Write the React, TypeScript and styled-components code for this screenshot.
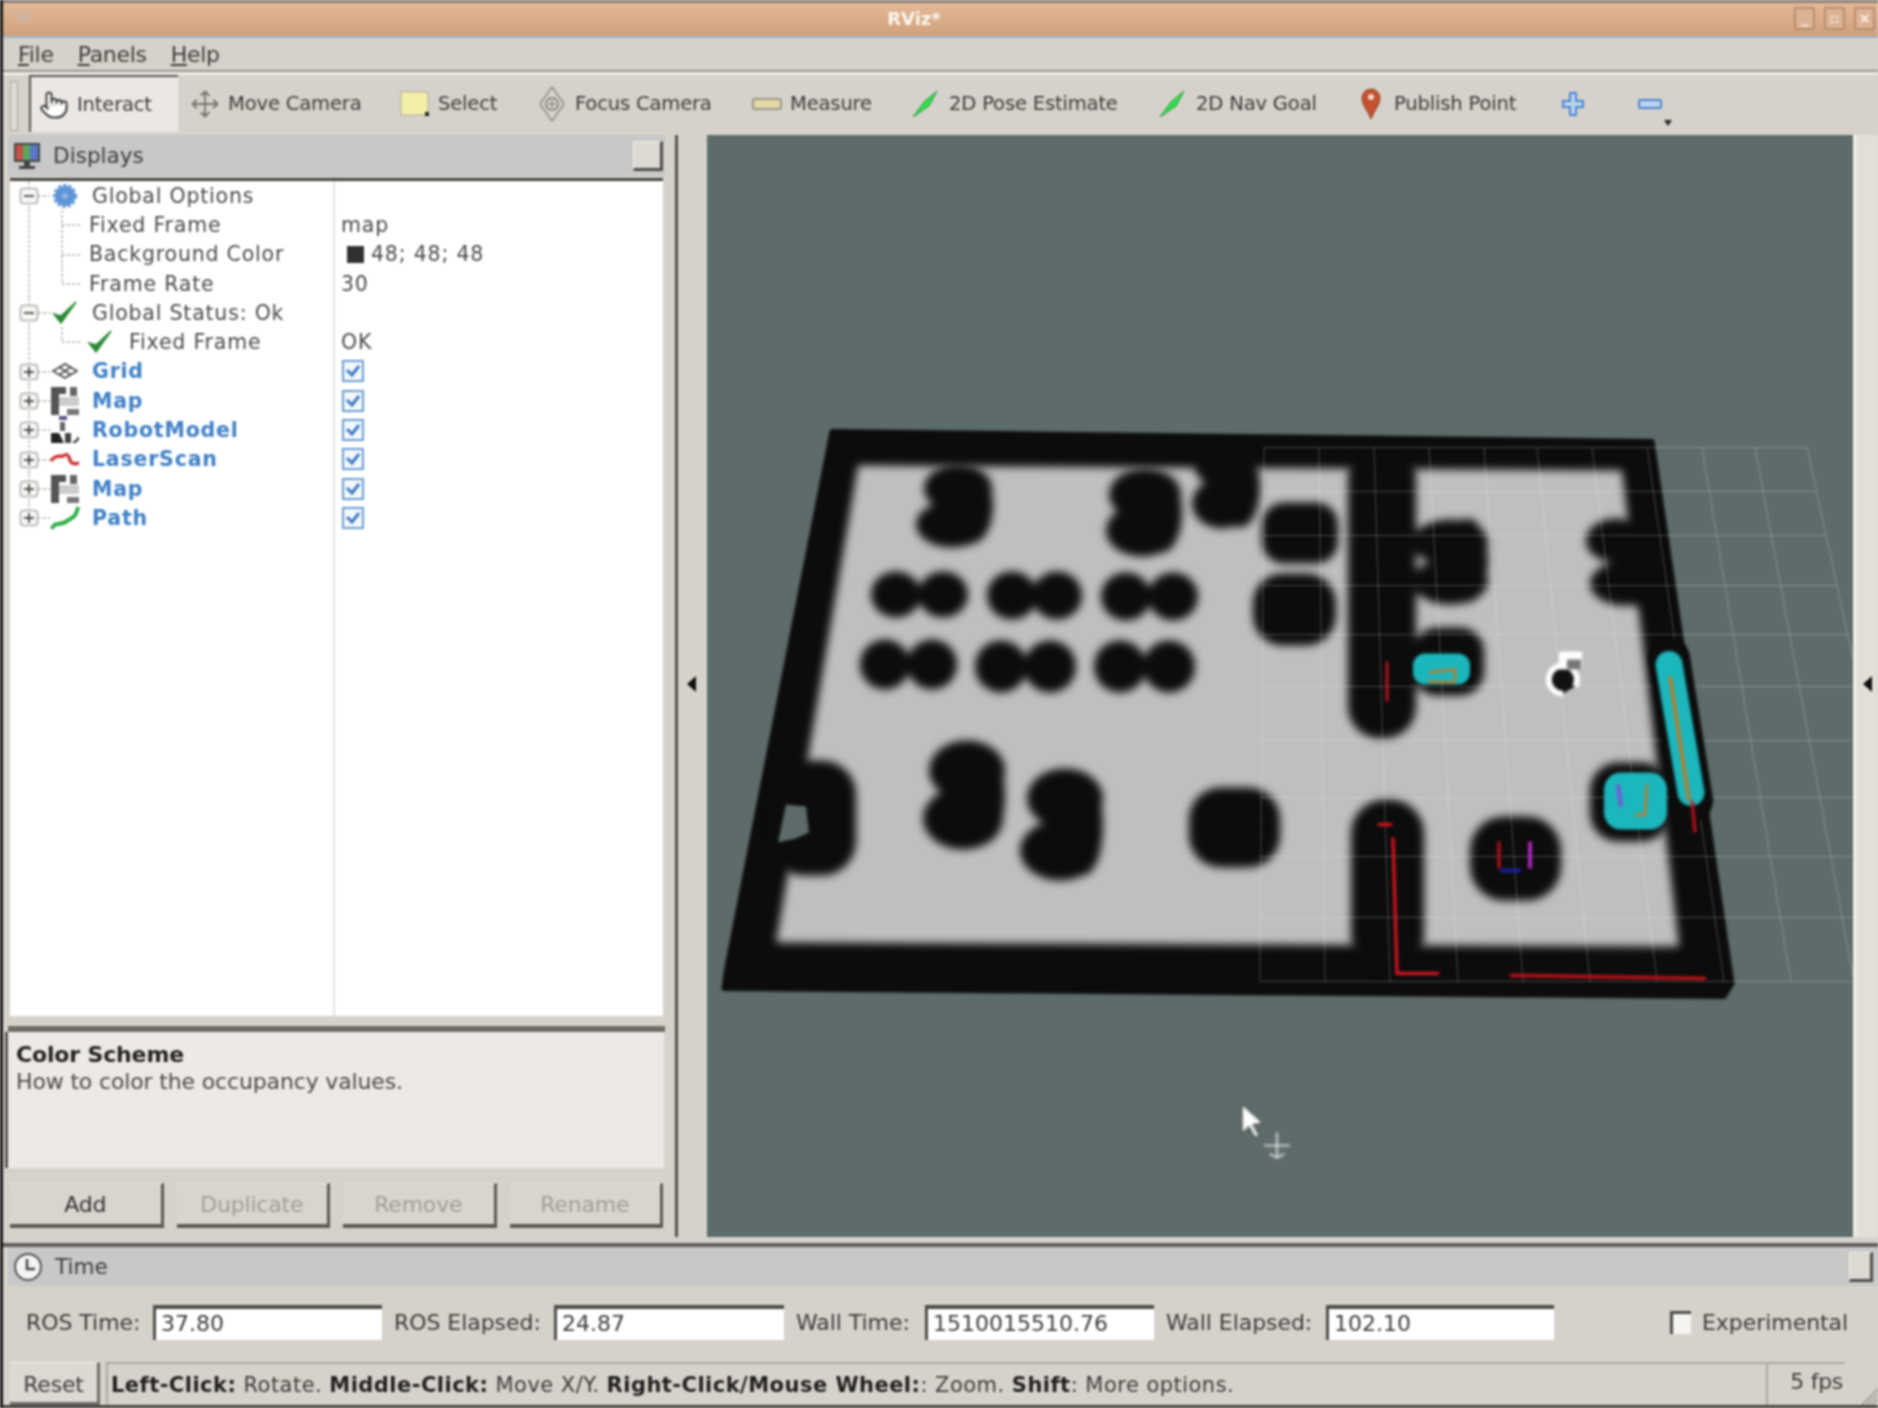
import styled, { createGlobalStyle } from 'styled-components';
import { Move, Pointer } from 'lucide-react';

const GlobalStyle = createGlobalStyle`
  html, body {
    margin: 0;
    padding: 0;
    background: #d6d2cb;
  }
`;

const Window = styled.div`
  width: 1878px;
  height: 1408px;
  overflow: hidden;
  display: flex;
  flex-direction: column;
  position: relative;
  background: #d6d2cb;
  color: #3c3c3a;
  font-family: 'DejaVu Sans', sans-serif;
  font-size: 20px;
  filter: blur(0.9px);
  &::before {
    content: '';
    position: absolute;
    left: 0;
    top: 0;
    bottom: 0;
    width: 3px;
    background: #141414;
    z-index: 2;
  }
`;

const TitleBar = styled.div`
  height: 30px;
  flex: none;
  border-top: 3px solid #8d8378;
  border-bottom: 2px solid #9db3c6;
  background: linear-gradient(#e4b896, #cfa17c);
  display: flex;
  align-items: center;
  position: relative;
  padding: 0 3px 3px 14px;
`;

const TitleText = styled.div`
  position: absolute;
  left: 880px;
  width: 68px;
  text-align: center;
  color: #fbf6f0;
  font-size: 18px;
  font-weight: bold;
`;

const WinButtons = styled.div`
  margin-left: auto;
  display: flex;
  gap: 9px;
`;

const WinButton = styled.div`
  width: 21px;
  height: 23px;
  box-sizing: border-box;
  border: 2px solid #b98d6c;
  border-radius: 2px;
  background: #dcb294;
  color: #fff5ea;
  font-size: 14px;
  font-weight: bold;
  line-height: 18px;
  text-align: center;
`;

const MenuBar = styled.div`
  height: 32px;
  flex: none;
  border-bottom: 2px solid #96938c;
  display: flex;
  align-items: center;
  gap: 24px;
  padding-left: 18px;
  font-size: 22px;
  letter-spacing: -0.3px;
`;

const MenuItem = styled.span`
  &::first-letter {
    text-decoration: underline;
  }
`;

const ToolBar = styled.div`
  height: 60px;
  flex: none;
  box-sizing: content-box;
  border-top: 3px solid #efece7;
  display: flex;
  align-items: stretch;
  position: relative;
`;

const Grip = styled.div`
  width: 29px;
  flex: none;
  position: relative;
  &::before {
    content: '';
    position: absolute;
    left: 10px;
    top: 6px;
    bottom: 4px;
    width: 6px;
    border: 1px solid #a8a59f;
    background: #dedbd5;
  }
`;

const ToolButton = styled.div<{ $width: number; $active?: boolean }>`
  width: ${(p) => p.$width}px;
  flex: none;
  box-sizing: border-box;
  height: 57px;
  margin-right: ${(p) => (p.$active ? 4 : 0)}px;
  padding-left: 8px;
  display: flex;
  align-items: center;
  gap: 8px;
  font-size: 19.6px;
  letter-spacing: -0.2px;
  white-space: nowrap;
  background: ${(p) => (p.$active ? '#ebe8e3' : 'transparent')};
  border-top: ${(p) => (p.$active ? '2px solid #55534f' : 'none')};
  border-left: ${(p) => (p.$active ? '2px solid #55534f' : 'none')};
`;

const ToolIcon = styled.span`
  width: 30px;
  height: 36px;
  flex: none;
  display: flex;
  align-items: center;
  justify-content: center;
`;

const DropMark = styled.div`
  position: absolute;
  left: 1664px;
  top: 45px;
  width: 0;
  height: 0;
  border-left: 4px solid transparent;
  border-right: 4px solid transparent;
  border-top: 6px solid #222;
`;

const Main = styled.div`
  height: 1102px;
  flex: none;
  display: flex;
`;

const LeftColumn = styled.div`
  width: 657px;
  flex: none;
  margin-left: 8px;
  display: flex;
  flex-direction: column;
  position: relative;
`;

const DockHeader = styled.div<{ $height: number }>`
  height: ${(p) => p.$height}px;
  flex: none;
  background: #c8c8c8;
  display: flex;
  align-items: center;
  font-size: 21.6px;
`;

const DockTitle = styled.span`
  margin-left: 11px;
`;

const DockFloat = styled.div`
  margin-left: auto;
  width: 30px;
  height: 30px;
  box-sizing: border-box;
  background: #dcd9d3;
  border: 1px solid #f3f1ec;
  border-right: 3px solid #4e4d4a;
  border-bottom: 3px solid #4e4d4a;
`;

const DisplaysFloat = styled(DockFloat)`
  margin-right: 2px;
`;

const Tree = styled.div`
  margin: 2px 2px 0;
  height: 838px;
  flex: none;
  box-sizing: border-box;
  background: #fff;
  border-top: 3px solid #454441;
  position: relative;
  font-size: 20.5px;
  letter-spacing: 0.8px;
  &::after {
    content: '';
    position: absolute;
    left: 323px;
    top: 0;
    bottom: 0;
    width: 2px;
    background: #e4e4e2;
  }
`;

const TreeRow = styled.div`
  height: 29.3px;
  display: flex;
  align-items: center;
`;

const NameCell = styled.div`
  width: 323px;
  flex: none;
  display: flex;
  align-items: center;
  height: 100%;
`;

const RowIcon = styled.span`
  width: 30px;
  height: 30px;
  flex: none;
  display: flex;
  align-items: center;
  justify-content: center;
`;

const RowLabel = styled.span<{ $indent: number; $display?: boolean }>`
  margin-left: ${(p) => p.$indent}px;
  white-space: nowrap;
  color: ${(p) => (p.$display ? '#3f80c6' : '#4a4a48')};
  font-weight: ${(p) => (p.$display ? 'bold' : 'normal')};
`;

const ValueCell = styled.div`
  margin-left: 8px;
  display: flex;
  align-items: center;
  gap: 7px;
  color: #4a4a48;
`;

const Swatch = styled.span`
  width: 17px;
  height: 17px;
  margin-left: 6px;
  background: #303030;
`;

const Check = styled.span`
  width: 22px;
  height: 22px;
  box-sizing: border-box;
  margin-left: 1px;
  border: 2px solid #6a9bd0;
  background: #f4f8fc;
  display: flex;
  align-items: center;
  justify-content: center;
`;

const SplitLine = styled.div`
  height: 16px;
  flex: none;
  box-sizing: border-box;
  border-bottom: 6px solid #6f6d68;
`;

const HelpPanel = styled.div`
  height: 136px;
  flex: none;
  box-sizing: border-box;
  margin-right: 1px;
  padding: 9px 8px;
  background: #edeae5;
  box-shadow: -3px 0 0 #555450;
  font-size: 22px;
  line-height: 27px;
  letter-spacing: -0.15px;
  color: #4b4a47;
  b {
    display: block;
    color: #222;
  }
`;

const ButtonRow = styled.div`
  display: flex;
  gap: 13px;
  padding: 15px 2px 0;
`;

const PanelButton = styled.div<{ $disabled?: boolean }>`
  width: 153.5px;
  height: 45px;
  box-sizing: border-box;
  display: flex;
  align-items: center;
  justify-content: center;
  font-size: 22px;
  letter-spacing: -0.2px;
  color: ${(p) => (p.$disabled ? '#a09e98' : '#333')};
  background: #d8d5ce;
  border-top: 1px solid #e6e3dd;
  border-right: 3px solid #5a5955;
  border-bottom: 4px solid #5a5955;
`;

const Splitter = styled.div`
  width: 42px;
  flex: none;
  position: relative;
  &::before {
    content: '';
    position: absolute;
    left: 10px;
    top: 0;
    bottom: 0;
    width: 3px;
    background: #55534f;
  }
`;

const Arrow = styled.div<{ $left: number }>`
  position: absolute;
  left: ${(p) => p.$left}px;
  top: 541px;
  width: 0;
  height: 0;
  border-top: 8px solid transparent;
  border-bottom: 8px solid transparent;
  border-right: 9px solid #111;
`;

const Viewport = styled.div`
  width: 1146px;
  flex: none;
  background: #5d6c6a;
`;

const MapDrawing = styled.svg`
  display: block;
  width: 100%;
  height: 100%;
`;

const RightStrip = styled.div`
  flex: 1;
  position: relative;
  background: #e2dfd9;
  border-left: 4px solid #efede8;
`;

const TimeDock = styled.div`
  height: 125px;
  flex: none;
  box-sizing: border-box;
  padding: 6px 0 0 8px;
  display: flex;
  flex-direction: column;
`;

const DockRule = styled.div`
  height: 4px;
  flex: none;
  background: #5f5d59;
  margin-left: -8px;
`;

const TimeFloat = styled(DockFloat)`
  width: 24px;
  margin-right: 5px;
`;

const TimeRow = styled.div`
  flex: 1;
  display: flex;
  align-items: center;
  padding: 0 0 4px 18px;
  font-size: 22px;
  letter-spacing: -0.05px;
`;

const TimeLabel = styled.span<{ $width: number }>`
  width: ${(p) => p.$width}px;
  flex: none;
  white-space: nowrap;
`;

const TimeInput = styled.div<{ $width: number }>`
  width: ${(p) => p.$width}px;
  height: 35px;
  flex: none;
  box-sizing: border-box;
  background: #fff;
  border-top: 4px solid #4e4d49;
  border-left: 3px solid #4e4d49;
  padding-left: 5px;
  line-height: 29px;
  letter-spacing: 0;
  margin-right: 12px;
`;

const Experimental = styled.label`
  margin-left: 104px;
  display: flex;
  align-items: center;
  gap: 11px;
`;

const ExperimentalBox = styled.span`
  width: 21px;
  height: 23px;
  box-sizing: border-box;
  background: #f6f4f0;
  border-top: 3px solid #4e4d49;
  border-left: 3px solid #4e4d49;
`;

const StatusBar = styled.div`
  height: 43px;
  flex: none;
  display: flex;
  padding-left: 10px;
  border-bottom: 3px solid #45443f;
  position: relative;
`;

const ResetButton = styled.div`
  width: 90px;
  box-sizing: border-box;
  display: flex;
  align-items: center;
  justify-content: center;
  padding-top: 3px;
  background: #dcd9d3;
  border-top: 1px solid #efece7;
  border-right: 3px solid #6d6b66;
  border-bottom: 3px solid #6d6b66;
  font-size: 22px;
  letter-spacing: -0.2px;
`;

const StatusText = styled.div`
  width: 1660px;
  margin-left: 6px;
  box-sizing: border-box;
  border-top: 2px solid #aaa7a0;
  border-left: 2px solid #aaa7a0;
  padding: 9px 0 0 3px;
  font-size: 21px;
  letter-spacing: 0.47px;
  white-space: nowrap;
  b {
    color: #1f1f1e;
  }
`;

const FpsBox = styled.div`
  width: 79px;
  box-sizing: border-box;
  border-top: 2px solid #aaa7a0;
  border-left: 2px solid #aaa7a0;
  text-align: right;
  padding: 5px 2px 0 0;
  font-size: 22px;
  letter-spacing: -0.3px;
`;

const ResizeGrip = styled.svg`
  position: absolute;
  right: 0;
  bottom: 0;
`;

const toolItems = [
  { label: 'Interact', width: 149, active: true, icon: <Pointer size={30} color="#444" fill="#fff" strokeWidth={1.6} /> },
  {
    label: 'Move Camera',
    width: 210,
    icon: <Move size={30} color="#77756f" strokeWidth={1.5} />,
  },
  {
    label: 'Select',
    width: 137,
    icon: (
      <svg width="30" height="28" viewBox="0 0 30 28">
        <rect x="1" y="2" width="27" height="23" fill="#f4efa8" stroke="#77756a" strokeDasharray="2 2" />
        <rect x="25" y="22" width="4" height="4" fill="#222" />
      </svg>
    ),
  },
  {
    label: 'Focus Camera',
    width: 215,
    icon: (
      <svg width="30" height="36" viewBox="0 0 30 36">
        <path d="M15 1 L27 18 L15 35 L3 18 Z" fill="none" stroke="#8e8c86" strokeWidth="1.5" />
        <circle cx="15" cy="18" r="6" fill="none" stroke="#77756f" strokeWidth="1.5" />
        <path d="M15 14v8M11 18h8" stroke="#77756f" />
      </svg>
    ),
  },
  {
    label: 'Measure',
    width: 159,
    icon: (
      <svg width="30" height="12" viewBox="0 0 30 12">
        <rect x="1" y="1" width="28" height="10" rx="2" fill="#e2d9a3" stroke="#87847a" strokeWidth="1.5" />
      </svg>
    ),
  },
  {
    label: '2D Pose Estimate',
    width: 247,
    icon: (
      <svg width="30" height="30" viewBox="0 0 30 30">
        <path d="M2 28 L13 13 L26 2 L18 17 Z" fill="#2fe04d" stroke="#2a9a3c" strokeWidth="1" />
      </svg>
    ),
  },
  {
    label: '2D Nav Goal',
    width: 198,
    icon: (
      <svg width="30" height="30" viewBox="0 0 30 30">
        <path d="M2 28 L13 13 L26 2 L18 17 Z" fill="#2fe04d" stroke="#2a9a3c" strokeWidth="1" />
      </svg>
    ),
  },
  {
    label: 'Publish Point',
    width: 202,
    icon: (
      <svg width="20" height="32" viewBox="0 0 20 32">
        <path d="M10 31 C7 23 1 17 1 10 A9 9 0 0 1 19 10 C19 17 13 23 10 31 Z" fill="#c4502f" stroke="#8c4425" />
        <circle cx="10" cy="9" r="3" fill="#f1d6c8" />
      </svg>
    ),
  },
  {
    label: '',
    width: 77,
    icon: (
      <svg width="24" height="26" viewBox="0 0 24 26">
        <path d="M9 2h6v8h7v6h-7v8H9v-8H2v-6h7z" fill="#bcd4f0" stroke="#4a86d0" strokeWidth="2" />
      </svg>
    ),
  },
  {
    label: '',
    width: 60,
    icon: (
      <svg width="24" height="12" viewBox="0 0 24 12">
        <rect x="1" y="2" width="22" height="8" rx="1" fill="#bcd4f0" stroke="#4a86d0" strokeWidth="2" />
      </svg>
    ),
  },
];

const MapGlyph = () => (
  <svg width="30" height="30" viewBox="0 0 30 30">
    <path d="M1 1h15v7H9v21H1z" fill="#555" />
    <rect x="20" y="1" width="7" height="9" fill="#666" />
    <rect x="9" y="11" width="20" height="9" fill="#ccc" />
    <rect x="17" y="23" width="12" height="6" fill="#777" />
  </svg>
);

const iconFor: Record<string, React.ReactNode> = {
  gear: (
    <svg width="26" height="26" viewBox="0 0 26 26">
      <circle cx="13" cy="13" r="10" fill="#5f94d6" stroke="#5f94d6" strokeWidth="4" strokeDasharray="3 2" />
      <circle cx="13" cy="13" r="3" fill="#8db4e4" />
    </svg>
  ),
  check: (
    <svg width="28" height="26" viewBox="0 0 28 26">
      <path d="M3 14 L10 23 L25 2 L10 16 Z" fill="#2c8a35" stroke="#2c8a35" strokeWidth="1.5" />
    </svg>
  ),
  grid: (
    <svg width="26" height="16" viewBox="0 0 26 16">
      <path d="M1 8 L13 1 L25 8 L13 15 Z" fill="none" stroke="#555" strokeWidth="2" />
      <path d="M7 4 L19 12 M19 4 L7 12" stroke="#555" strokeWidth="2" />
    </svg>
  ),
  map: <MapGlyph />,
  robot: (
    <svg width="30" height="30" viewBox="0 0 30 30">
      <rect x="9" y="1" width="8" height="4" fill="#56568a" />
      <rect x="10" y="7" width="5" height="9" fill="#666" />
      <path d="M1 28V18h8l5 10z" fill="#222" />
      <path d="M15 18h6v10h-6z" fill="#444" />
      <path d="M23 27c4 0 5-2 5-5" fill="none" stroke="#333" strokeWidth="2" />
    </svg>
  ),
  laser: (
    <svg width="30" height="20" viewBox="0 0 30 20">
      <path d="M1 12 C6 5 10 8 13 7 C17 5 17 5 19 8 C20 14 23 16 29 14" fill="none" stroke="#cf3838" strokeWidth="3.5" />
    </svg>
  ),
  path: (
    <svg width="30" height="28" viewBox="0 0 30 28">
      <path d="M2 25 C4 17 12 22 17 17 C22 13 26 14 28 3" fill="none" stroke="#2fb04a" strokeWidth="4" />
    </svg>
  ),
};

type Row = {
  name: string;
  level: 'top' | 'child' | 'statusChild';
  expanded?: boolean;
  last?: boolean;
  end?: boolean;
  icon?: string;
  display?: boolean;
  value?: string;
  swatch?: boolean;
  checked?: boolean;
};

const rows: Row[] = [
  { name: 'Global Options', level: 'top', expanded: true, icon: 'gear' },
  { name: 'Fixed Frame', level: 'child', value: 'map' },
  { name: 'Background Color', level: 'child', value: '48; 48; 48', swatch: true },
  { name: 'Frame Rate', level: 'child', value: '30', last: true },
  { name: 'Global Status: Ok', level: 'top', expanded: true, icon: 'check' },
  { name: 'Fixed Frame', level: 'statusChild', icon: 'check', value: 'OK', last: true },
  { name: 'Grid', level: 'top', icon: 'grid', display: true, checked: true },
  { name: 'Map', level: 'top', icon: 'map', display: true, checked: true },
  { name: 'RobotModel', level: 'top', icon: 'robot', display: true, checked: true },
  { name: 'LaserScan', level: 'top', icon: 'laser', display: true, checked: true },
  { name: 'Map', level: 'top', icon: 'map', display: true, checked: true },
  { name: 'Path', level: 'top', icon: 'path', display: true, checked: true, end: true },
];

const guideWidth = { top: 40, child: 79, statusChild: 75 };
const labelIndent = { top: 12, child: 0, statusChild: 14 };

// dotted branches and the +/- box in front of each tree row
const TreeGuide = ({ row }: { row: Row }) => {
  const width = guideWidth[row.level];
  return (
    <svg width={width} height="29.3" viewBox={`0 0 ${width} 29.3`} style={{ flex: 'none' }}>
      <path d={`M19 0V${row.end ? 15 : 29.3}`} stroke="#b4b4b2" strokeWidth="1.4" strokeDasharray="3 2" />
      {row.level === 'top' ? (
        <>
          <path d="M28 15H40" stroke="#b4b4b2" strokeWidth="1.4" strokeDasharray="3 2" />
          <rect x="10.5" y="7.5" width="17" height="15" rx="3" fill="#f7f7f5" stroke="#b0b0ad" strokeWidth="1.6" />
          <path d="M14 15H24" stroke="#333" strokeWidth="1.6" />
          {!row.expanded && <path d="M19 10V20" stroke="#333" strokeWidth="1.6" />}
        </>
      ) : (
        <path
          d={`M52 0V${row.last ? 15 : 29.3}M52 15H72`}
          stroke="#b4b4b2"
          strokeWidth="1.4"
          strokeDasharray="3 2"
        />
      )}
    </svg>
  );
};

const CheckMark = () => (
  <svg width="16" height="14" viewBox="0 0 16 14">
    <path d="M2 6 L7 11 L14 2" fill="none" stroke="#3b79c2" strokeWidth="3" />
  </svg>
);

const inflated = [
  { cx: 958, cy: 488, rx: 34, ry: 24 },
  { cx: 952, cy: 524, rx: 36, ry: 23 },
  { cx: 972, cy: 505, rx: 21, ry: 38 },
  { cx: 1145, cy: 494, rx: 36, ry: 26 },
  { cx: 1142, cy: 530, rx: 36, ry: 26 },
  { cx: 1162, cy: 512, rx: 20, ry: 40 },
  { cx: 1225, cy: 466, rx: 30, ry: 22 },
  { cx: 1222, cy: 503, rx: 30, ry: 25 },
  { cx: 1240, cy: 487, rx: 20, ry: 40 },
  { cx: 896, cy: 594, rx: 25, ry: 23 },
  { cx: 943, cy: 594, rx: 25, ry: 23 },
  { cx: 1012, cy: 595, rx: 25, ry: 24 },
  { cx: 1057, cy: 595, rx: 25, ry: 24 },
  { cx: 1126, cy: 596, rx: 25, ry: 24 },
  { cx: 1173, cy: 596, rx: 25, ry: 24 },
  { cx: 885, cy: 664, rx: 25, ry: 25 },
  { cx: 932, cy: 664, rx: 25, ry: 25 },
  { cx: 1001, cy: 666, rx: 26, ry: 26 },
  { cx: 1050, cy: 666, rx: 26, ry: 26 },
  { cx: 1120, cy: 666, rx: 26, ry: 26 },
  { cx: 1169, cy: 666, rx: 26, ry: 26 },
  { cx: 967, cy: 770, rx: 38, ry: 30 },
  { cx: 963, cy: 818, rx: 40, ry: 31 },
  { cx: 985, cy: 795, rx: 20, ry: 48 },
  { cx: 1065, cy: 798, rx: 38, ry: 30 },
  { cx: 1060, cy: 850, rx: 40, ry: 30 },
  { cx: 1083, cy: 825, rx: 20, ry: 50 },
  { cx: 1450, cy: 542, rx: 38, ry: 23 },
  { cx: 1450, cy: 581, rx: 38, ry: 23 },
  { cx: 1468, cy: 560, rx: 20, ry: 42 },
  { cx: 1616, cy: 540, rx: 30, ry: 22 },
  { cx: 1620, cy: 583, rx: 30, ry: 21 },
];

const blocks = [
  { x: 1262, y: 502, w: 76, h: 61, r: 22 },
  { x: 1253, y: 573, w: 83, h: 72, r: 30 },
  { x: 1189, y: 787, w: 91, h: 80, r: 32 },
  { x: 770, y: 760, w: 86, h: 115, r: 34 },
  { x: 1348, y: 445, w: 68, h: 293, r: 32 },
  { x: 1351, y: 799, w: 73, h: 170, r: 34 },
  { x: 1413, y: 627, w: 71, h: 68, r: 24 },
  { x: 1590, y: 762, w: 80, h: 79, r: 28 },
  { x: 1470, y: 816, w: 91, h: 84, r: 34 },
  { x: 1610, y: 520, w: 50, h: 85, r: 8 },
];

const rowYs = [447, 491, 535, 585, 634, 686, 740, 797, 856, 917, 981];
const topXs = [1264, 1319, 1374, 1429, 1484, 1537, 1592, 1647, 1702, 1755, 1807];
const bottomXs = [1260, 1325, 1390, 1458, 1523, 1590, 1657, 1724, 1791, 1854, 1923];

const xAt = (col: number, y: number) =>
  topXs[col] + ((bottomXs[col] - topXs[col]) * (y - 447)) / (981 - 447);

const SceneMap = () => (
  <MapDrawing viewBox="707 135 1146 1101">
    <defs>
      <filter id="soft" x="-10%" y="-10%" width="120%" height="120%" colorInterpolationFilters="sRGB">
        <feGaussianBlur stdDeviation="4" />
      </filter>
      <filter id="slight" x="-10%" y="-10%" width="120%" height="120%" colorInterpolationFilters="sRGB">
        <feGaussianBlur stdDeviation="1" />
      </filter>
    </defs>
    <polygon
      points="832,431 1652,441 1732,983 1724,996 724,988 726,972"
      fill="#0c0c0c"
      stroke="#0c0c0c"
      strokeWidth="5"
      strokeLinejoin="round"
      filter="url(#slight)"
    />
    <polygon points="858,465 1622,470 1679,946 776,942" fill="#bfbfbf" filter="url(#soft)" />
    <g filter="url(#soft)" fill="#0c0c0c">
      {inflated.map((e) => (
        <ellipse key={`${e.cx}-${e.cy}`} {...e} />
      ))}
      {blocks.map((b) => (
        <rect key={`${b.x}-${b.y}`} x={b.x} y={b.y} width={b.w} height={b.h} rx={b.r} />
      ))}
    </g>
    <polygon points="786,804 806,806 809,832 796,838 778,842" fill="#5d6c6a" filter="url(#slight)" />
    <g stroke="#ffffff" strokeOpacity="0.17" strokeWidth="1.4" fill="none">
      {rowYs.map((y) => (
        <path key={y} d={`M${xAt(0, y)} ${y}L${Math.min(xAt(10, y), 1853)} ${y}`} />
      ))}
      {topXs.map((x, i) => (
        <path key={x} d={`M${x} 447L${xAt(i, 981)} 981`} />
      ))}
    </g>
    <g filter="url(#slight)">
      <path d="M1669 658L1692 800" stroke="#0c0c0c" strokeWidth="42" strokeLinecap="round" />
      <path d="M1669 664L1691 792" stroke="#1cb7bd" strokeWidth="27" strokeLinecap="round" />
      <path d="M1670 676L1689 800" stroke="#c5781f" strokeWidth="3.5" />
      <path d="M1692 800L1695 832" stroke="#c4141c" strokeWidth="3" />
      <rect x="1413" y="653" width="57" height="31" rx="12" fill="#1cb7bd" />
      <path d="M1428 681L1455 682M1455 681V669L1429 672" fill="none" stroke="#c5781f" strokeWidth="2.5" />
      <rect x="1604" y="772" width="63" height="57" rx="17" fill="#1cb7bd" />
      <path d="M1618 784L1621 806" stroke="#7a55d8" strokeWidth="4" />
      <path d="M1647 784L1645 814L1635 815" fill="none" stroke="#c5781f" strokeWidth="2.5" />
      <path d="M1499 841V868" stroke="#c4141c" strokeWidth="3" />
      <path d="M1530 841V868" stroke="#c92bd8" strokeWidth="3.5" />
      <path d="M1500 870H1521" stroke="#1c1c9c" strokeWidth="4" />
      <path d="M1387 661V701" stroke="#e01620" strokeWidth="2.5" />
      <path d="M1378 824H1392M1393 837L1397 973H1439" fill="none" stroke="#ec1620" strokeWidth="3" />
      <path d="M1510 975L1706 978" stroke="#c4141c" strokeWidth="3.5" />
      <path d="M1563 693A14 14 0 1 1 1575 686" fill="#111" stroke="#fff" strokeWidth="6" />
      <rect x="1559" y="651" width="23" height="18" fill="#fff" />
      <rect x="1567" y="659" width="14" height="10" fill="#777" />
    </g>
    <g filter="url(#slight)">
      <path d="M1242 1104V1133L1249 1126L1255 1137L1259 1135L1253 1124L1263 1123Z" fill="#fff" stroke="#222" strokeWidth="1" />
      <path d="M1277 1132V1158M1264 1145H1290M1270 1153Q1277 1160 1284 1153" fill="none" stroke="#f2f2f2" strokeWidth="1.6" />
    </g>
  </MapDrawing>
);

const App = () => (
  <Window>
    <GlobalStyle />
    <TitleBar>
      <svg width="20" height="14" viewBox="0 0 20 14">
        <path d="M2 2h6v4H2zM11 2h6v4h-6zM6 8h8v4H6z" fill="none" stroke="#c9b6a5" strokeWidth="1.5" />
      </svg>
      <TitleText>RViz*</TitleText>
      <WinButtons>
        <WinButton>_</WinButton>
        <WinButton>▫</WinButton>
        <WinButton>×</WinButton>
      </WinButtons>
    </TitleBar>
    <MenuBar>
      <MenuItem>File</MenuItem>
      <MenuItem>Panels</MenuItem>
      <MenuItem>Help</MenuItem>
    </MenuBar>
    <ToolBar>
      <Grip />
      {toolItems.map((item, i) => (
        <ToolButton key={i} $width={item.width} $active={item.active}>
          <ToolIcon>{item.icon}</ToolIcon>
          {item.label && <span>{item.label}</span>}
        </ToolButton>
      ))}
      <DropMark />
    </ToolBar>
    <Main>
      <LeftColumn>
        <DockHeader $height={41}>
          <svg width="30" height="30" viewBox="0 0 30 30" style={{ marginLeft: 4 }}>
            <rect x="2" y="2" width="26" height="19" fill="#444" />
            <rect x="4" y="4" width="7" height="15" fill="#c9504b" />
            <rect x="11" y="4" width="7" height="15" fill="#5aa65a" />
            <rect x="18" y="4" width="8" height="15" fill="#5a78c8" />
            <path d="M12 21h6v4h5v3H7v-3h5z" fill="#444" />
          </svg>
          <DockTitle>Displays</DockTitle>
          <DisplaysFloat />
        </DockHeader>
        <Tree>
          {rows.map((row, i) => (
            <TreeRow key={i}>
              <NameCell>
                <TreeGuide row={row} />
                {row.icon && <RowIcon>{iconFor[row.icon]}</RowIcon>}
                <RowLabel $indent={labelIndent[row.level]} $display={row.display}>
                  {row.name}
                </RowLabel>
              </NameCell>
              <ValueCell>
                {row.swatch && <Swatch />}
                {row.value}
                {row.checked && (
                  <Check>
                    <CheckMark />
                  </Check>
                )}
              </ValueCell>
            </TreeRow>
          ))}
        </Tree>
        <SplitLine />
        <HelpPanel>
          <b>Color Scheme</b>
          How to color the occupancy values.
        </HelpPanel>
        <ButtonRow>
          <PanelButton>Add</PanelButton>
          <PanelButton $disabled>Duplicate</PanelButton>
          <PanelButton $disabled>Remove</PanelButton>
          <PanelButton $disabled>Rename</PanelButton>
        </ButtonRow>
      </LeftColumn>
      <Splitter>
        <Arrow $left={22} />
      </Splitter>
      <Viewport>
        <SceneMap />
      </Viewport>
      <RightStrip>
        <Arrow $left={6} />
      </RightStrip>
    </Main>
    <TimeDock>
      <DockRule />
      <DockHeader $height={39}>
        <svg width="32" height="32" viewBox="0 0 32 32" style={{ marginLeft: 4 }}>
          <circle cx="16" cy="16" r="13" fill="#f4f4f2" stroke="#555" strokeWidth="2" />
          <path d="M15 8V18H23" fill="none" stroke="#444" strokeWidth="2.5" />
        </svg>
        <DockTitle>Time</DockTitle>
        <TimeFloat />
      </DockHeader>
      <TimeRow>
        <TimeLabel $width={127}>ROS Time:</TimeLabel>
        <TimeInput $width={229}>37.80</TimeInput>
        <TimeLabel $width={160}>ROS Elapsed:</TimeLabel>
        <TimeInput $width={230}>24.87</TimeInput>
        <TimeLabel $width={129}>Wall Time:</TimeLabel>
        <TimeInput $width={229}>1510015510.76</TimeInput>
        <TimeLabel $width={160}>Wall Elapsed:</TimeLabel>
        <TimeInput $width={228}>102.10</TimeInput>
        <Experimental>
          <ExperimentalBox />
          Experimental
        </Experimental>
      </TimeRow>
    </TimeDock>
    <StatusBar>
      <ResetButton>Reset</ResetButton>
      <StatusText>
        <b>Left-Click:</b> Rotate. <b>Middle-Click:</b> Move X/Y. <b>Right-Click/Mouse Wheel:</b>: Zoom. <b>Shift</b>: More options.
      </StatusText>
      <FpsBox>5 fps</FpsBox>
      <ResizeGrip width="18" height="18" viewBox="0 0 18 18">
        <path d="M18 2L2 18M18 7L7 18M18 12L12 18" stroke="#98958e" strokeWidth="1.5" />
      </ResizeGrip>
    </StatusBar>
  </Window>
);

export default App;
